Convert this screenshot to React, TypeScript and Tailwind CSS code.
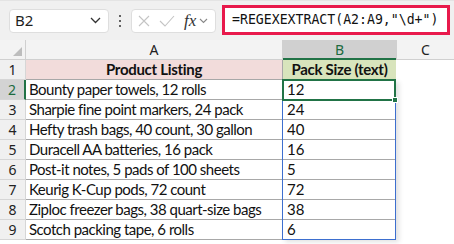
import React from "react";

const rows: [string, string][] = [
  ["Bounty paper towels, 12 rolls", "12"],
  ["Sharpie fine point markers, 24 pack", "24"],
  ["Hefty trash bags, 40 count, 30 gallon", "40"],
  ["Duracell AA batteries, 16 pack", "16"],
  ["Post-it notes, 5 pads of 100 sheets", "5"],
  ["Keurig K-Cup pods, 72 count", "72"],
  ["Ziploc freezer bags, 38 quart-size bags", "38"],
  ["Scotch packing tape, 6 rolls", "6"],
];

const ui = { fontFamily: '"Noto Sans", "Open Sans", sans-serif' };
const cellFont = { fontFamily: 'Lato, "Noto Sans", sans-serif' };

export default function App() {
  return (
    <div className="w-[454px] h-[244px] bg-white overflow-hidden">
      {/* Formula bar area */}
      <div className="h-[40px] bg-[#f0f0f0] border-t border-[#e4e4e4] flex items-center pl-[9px]" style={ui}>
        <div className="w-[100px] h-[24px] bg-white border border-[#dedede] rounded-[4px] flex items-center justify-between pl-[5px] pr-[7px]">
          <span className="text-[15px] text-[#1f1f1f] leading-none">B2</span>
          <svg width="11" height="7" viewBox="0 0 11 7">
            <path d="M1 1 L5.5 5.5 L10 1" fill="none" stroke="#333" strokeWidth="1.3" />
          </svg>
        </div>
        <div className="w-[22px] flex flex-col items-center gap-[3px]">
          <span className="w-[2px] h-[2px] bg-[#333] rounded-full" />
          <span className="w-[2px] h-[2px] bg-[#333] rounded-full" />
          <span className="w-[2px] h-[2px] bg-[#333] rounded-full" />
        </div>
        <div className="w-[85px] h-[24px] bg-white border border-[#dedede] rounded-[4px] flex items-center pl-[6px]">
          <svg width="12" height="12" viewBox="0 0 12 12">
            <path d="M1 1 L11 11 M11 1 L1 11" stroke="#c4c4c4" strokeWidth="1.1" fill="none" />
          </svg>
          <svg className="ml-[9px]" width="16" height="12" viewBox="0 0 16 12">
            <path d="M1 6 L6 11 L15 1" stroke="#c4c4c4" strokeWidth="1.1" fill="none" />
          </svg>
          <div className="flex items-center gap-[3px] ml-[9px]">
            <span className="text-[17px] italic text-[#333] leading-none" style={{ fontFamily: '"Liberation Serif", serif' }}>fx</span>
            <svg width="9" height="6" viewBox="0 0 9 6">
              <path d="M1 1 L4.5 4.5 L8 1" fill="none" stroke="#888" strokeWidth="1.1" />
            </svg>
          </div>
        </div>
        <div className="ml-[6px] w-[228px] h-[30px] bg-white border-[3px] border-[#e8194b] flex items-center pl-[7px] mt-[-1px]">
          <span className="text-[13.2px] text-[#111] leading-none whitespace-nowrap" style={{ fontFamily: '"DejaVu Sans Mono", monospace' }}>
            =REGEXEXTRACT(A2:A9,"\d+")
          </span>
        </div>
      </div>

      {/* Sheet */}
      <div className="relative">
        <div className="grid grid-cols-[26px_257px_113px_58px]">
          {/* header row */}
          <div className="h-[20px] bg-[#f3f3f3] border-r border-b border-[#d0d0d0] relative">
            <svg className="absolute right-[3px] bottom-[3px]" width="9" height="9" viewBox="0 0 9 9">
              <path d="M9 0 L9 9 L0 9 Z" fill="#bdbdbd" />
            </svg>
          </div>
          <div className="h-[20px] bg-[#f3f3f3] border-r border-b border-[#d0d0d0] flex items-center justify-center text-[14px] text-[#222]" style={ui}>A</div>
          <div className="h-[20px] bg-[#d0d0d0] border-b-2 border-[#217346] flex items-center justify-center text-[14px] text-[#1d6b3f]" style={ui}>B</div>
          <div className="h-[20px] bg-[#f3f3f3] border-l border-b border-[#d0d0d0] flex items-center justify-center text-[14px] text-[#222]" style={ui}>C</div>

          {/* row 1 */}
          <div className="h-[20px] bg-[#f0f0f0] border-r border-b border-[#d6d6d6] flex items-center justify-center text-[14px] text-[#222]" style={ui}>1</div>
          <div className="h-[20px] bg-[#f2dcdb] border-r border-b border-[#a8a8a8] flex items-center justify-center text-[15px] font-bold text-[#111] tracking-[-0.3px]" style={cellFont}>Product Listing</div>
          <div className="h-[20px] bg-[#d8e4bc] border-b border-[#a8a8a8] flex items-center justify-center text-[15px] font-bold text-[#111] tracking-[-0.3px]" style={cellFont}>Pack Size (text)</div>
          <div className="h-[20px] bg-white" />

          {rows.map(([a, b], i) => {
            const sel = i === 0;
            return (
              <React.Fragment key={i}>
                <div
                  className={
                    sel
                      ? "h-[20px] bg-[#d3d3d3] border-r-2 border-r-[#217346] border-b border-b-[#d6d6d6] flex items-center justify-center text-[14px] text-[#1d6b3f]"
                      : "h-[20px] bg-[#f0f0f0] border-r border-b border-[#d6d6d6] flex items-center justify-center text-[14px] text-[#222]"
                  }
                  style={ui}
                >
                  {i + 2}
                </div>
                <div className="h-[20px] border-r border-b border-[#a8a8a8] flex items-center pl-[3px] text-[15px] text-[#111] whitespace-nowrap overflow-hidden tracking-[-0.5px]" style={cellFont}>
                  {a}
                </div>
                <div className="h-[20px] border-b border-[#a8a8a8] flex items-center pl-[4px] text-[15px] text-[#111]" style={cellFont}>
                  {b}
                </div>
                <div className="h-[20px] bg-white" />
              </React.Fragment>
            );
          })}
        </div>

        {/* spill range border B2:B9 */}
        <div className="absolute left-[282px] top-[40px] w-[114px] h-[160px] border border-[#3d6fcf] shadow-[3px_2px_5px_rgba(0,0,0,0.12)] pointer-events-none" />
        {/* active cell B2 */}
        <div className="absolute left-[282px] top-[39px] w-[114px] h-[22px] border-2 border-[#217346] pointer-events-none" />
        <div className="absolute left-[392px] top-[57px] w-[6px] h-[6px] bg-[#217346] border border-white pointer-events-none" />
      </div>
    </div>
  );
}
